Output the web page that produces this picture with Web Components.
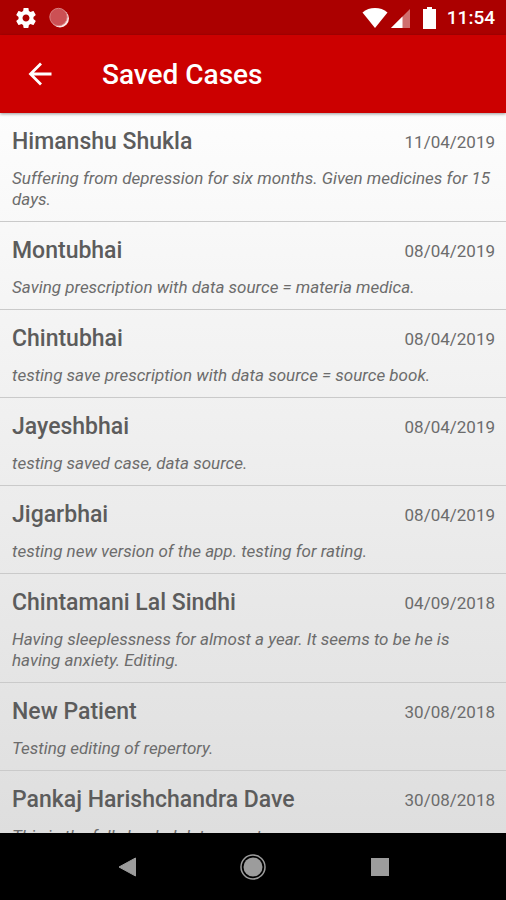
<!DOCTYPE html>
<html lang="en">
<head>
<meta charset="utf-8">
<meta name="viewport" content="width=device-width, initial-scale=1">
<title>Saved Cases</title>
<style>
    body {
        margin: 0;
        font-family: Roboto, sans-serif;
    }
</style>
</head>
<body>

<template id="sc-screen-template">
    <style>
        :host {
            display: flex;
            flex-direction: column;
            height: 100vh;
            overflow: hidden;
        }

        main {
            flex: 1;
            min-height: 0;
            overflow: hidden;
            background: linear-gradient(#fdfdfd, #dedede);
        }
    </style>
    <slot name="top"></slot>
    <main><slot></slot></main>
    <slot name="bottom"></slot>
</template>

<template id="sc-status-bar-template">
    <style>
        :host {
            display: flex;
            align-items: center;
            justify-content: space-between;
            height: 35px;
            padding: 0 11px 0 14px;
            background: #ab0000;
            color: #fff;
            font-size: 19px;
            font-weight: 500;
        }

        div {
            display: flex;
            align-items: center;
        }

        .left {
            gap: 10px;
        }

        svg {
            display: block;
        }

        .battery {
            margin: 0 11px 0 12px;
        }
    </style>
    <div class="left">
        <svg width="24" height="24" viewBox="0 0 24 24" fill="#fff"><path d="M19.43 12.98c.04-.32.07-.64.07-.98s-.03-.66-.07-.98l2.11-1.65c.19-.15.24-.42.12-.64l-2-3.46c-.12-.22-.39-.3-.61-.22l-2.49 1c-.52-.4-1.08-.73-1.69-.98l-.38-2.65C14.46 2.18 14.25 2 14 2h-4c-.25 0-.46.18-.49.42l-.38 2.65c-.61.25-1.17.59-1.69.98l-2.49-1c-.23-.09-.49 0-.61.22l-2 3.46c-.13.22-.07.49.12.64l2.11 1.65c-.04.32-.07.65-.07.98s.03.66.07.98l-2.11 1.65c-.19.15-.24.42-.12.64l2 3.46c.12.22.39.3.61.22l2.49-1c.52.4 1.08.73 1.69.98l.38 2.65c.03.24.24.42.49.42h4c.25 0 .46-.18.49-.42l.38-2.65c.61-.25 1.17-.59 1.69-.98l2.49 1c.23.09.49 0 .61-.22l2-3.46c.12-.22.07-.49-.12-.64l-2.11-1.65zM12 15.500c-1.930 0-3.500-1.570-3.500-3.500s1.570-3.500 3.500-3.500 3.500 1.570 3.500 3.500-1.570 3.500-3.500 3.500z"/></svg>
        <svg width="22" height="22" viewBox="0 0 22 22">
            <circle cx="12" cy="11.500" r="9" fill="#fbe6e6"/>
            <circle cx="10.500" cy="10" r="8.700" fill="#cc5054" stroke="#d98080"/>
        </svg>
    </div>
    <div>
        <svg width="26" height="22" viewBox="0 0 26 22" fill="#fff"><path d="M13 21 .5 5.500C4 2.300 8.300 1 13 1s9 1.300 12.500 4.500z"/></svg>
        <svg width="23" height="22" viewBox="0 0 23 22"><path d="M3 21 22 2v19z" fill="#cf6f6f"/><path d="M3 21 14.500 9.500V21z" fill="#fff"/></svg>
        <svg class="battery" width="13" height="22" viewBox="0 0 13 22" fill="#fff"><path d="M4 0h5v2h4v20H0V2h4z"/></svg>
        <span><slot></slot></span>
    </div>
</template>

<template id="sc-app-bar-template">
    <style>
        :host {
            display: flex;
            align-items: center;
            gap: 38px;
            height: 78px;
            padding: 0 16px;
            position: relative;
            background: #cc0000;
            color: #fff;
            box-shadow: 0 1px 3px rgba(0, 0, 0, 0.4);
        }

        button {
            width: 48px;
            height: 48px;
            padding: 0;
            border: 0;
            background: none;
            display: grid;
            place-items: center;
        }

        h1 {
            margin: 0;
            font-size: 28px;
            font-weight: 500;
        }
    </style>
    <button type="button" aria-label="Back">
        <svg width="24" height="24" viewBox="0 0 24 24" fill="none" stroke="#fff" stroke-width="2.800"><path d="M23.500 12H2.500M13 1.500 2.500 12 13 22.500"/></svg>
    </button>
    <h1><slot></slot></h1>
</template>

<template id="sc-case-template">
    <style>
        :host {
            display: block;
            padding: 13px 11px 11px 12px;
            border-bottom: 1px solid #cacaca;
            color: #6c6c6c;
        }

        header {
            display: flex;
            align-items: center;
            justify-content: space-between;
            height: 30px;
        }

        h2 {
            margin: 0;
            font-size: 23px;
            font-weight: 500;
            color: #5c5c5c;
        }

        time {
            padding-top: 2px;
            font-size: 17px;
        }

        p {
            margin: 12px 0 0;
            font-size: 17px;
            line-height: 21px;
            font-style: italic;
        }
    </style>
    <header>
        <h2><slot name="name"></slot></h2>
        <time><slot name="date"></slot></time>
    </header>
    <p><slot></slot></p>
</template>

<template id="sc-nav-bar-template">
    <style>
        :host {
            display: grid;
            grid-template-columns: repeat(3, 25%);
            justify-content: center;
            place-items: center;
            height: 67px;
            background: #000;
        }

        button {
            width: 28px;
            height: 28px;
            padding: 0;
            border: 0;
            background: none;
        }

        svg {
            display: block;
        }
    </style>
    <button type="button" aria-label="Back">
        <svg width="28" height="28" viewBox="0 0 28 28" fill="#9c9c9c"><path d="M22.500 5v18L6 14z" stroke="#9c9c9c" stroke-linejoin="round"/></svg>
    </button>
    <button type="button" aria-label="Home">
        <svg width="28" height="28" viewBox="0 0 28 28"><circle cx="14" cy="14" r="12" fill="none" stroke="#9c9c9c" stroke-width="1.500"/><circle cx="14" cy="14" r="9.500" fill="#9c9c9c"/></svg>
    </button>
    <button type="button" aria-label="Recent apps">
        <svg width="28" height="28" viewBox="0 0 28 28" fill="#9c9c9c"><path d="M5 5h18v18H5z"/></svg>
    </button>
</template>

<sc-screen>
    <sc-status-bar slot="top">11:54</sc-status-bar>
    <sc-app-bar slot="top">Saved Cases</sc-app-bar>

    <sc-case><span slot="name">Himanshu Shukla</span><span slot="date">11/04/2019</span>Suffering from depression for six months. Given medicines for 15 days.</sc-case>
    <sc-case><span slot="name">Montubhai</span><span slot="date">08/04/2019</span>Saving prescription with data source = materia medica.</sc-case>
    <sc-case><span slot="name">Chintubhai</span><span slot="date">08/04/2019</span>testing save prescription with data source = source book.</sc-case>
    <sc-case><span slot="name">Jayeshbhai</span><span slot="date">08/04/2019</span>testing saved case, data source.</sc-case>
    <sc-case><span slot="name">Jigarbhai</span><span slot="date">08/04/2019</span>testing new version of the app. testing for rating.</sc-case>
    <sc-case><span slot="name">Chintamani Lal Sindhi</span><span slot="date">04/09/2018</span>Having sleeplessness for almost a year. It seems to be he is having anxiety. Editing.</sc-case>
    <sc-case><span slot="name">New Patient</span><span slot="date">30/08/2018</span>Testing editing of repertory.</sc-case>
    <sc-case><span slot="name">Pankaj Harishchandra Dave</span><span slot="date">30/08/2018</span>This is the fully loaded data report.</sc-case>

    <sc-nav-bar slot="bottom"></sc-nav-bar>
</sc-screen>

<script>
    for (const name of ["sc-screen", "sc-status-bar", "sc-app-bar", "sc-case", "sc-nav-bar"]) {
        customElements.define(
            name,
            class extends HTMLElement {
                constructor() {
                    super();

                    const template = document.getElementById(`${name}-template`);
                    this.attachShadow({ mode: "open" }).append(template.content.cloneNode(true));
                }
            },
        );
    }
</script>
</body>
</html>
